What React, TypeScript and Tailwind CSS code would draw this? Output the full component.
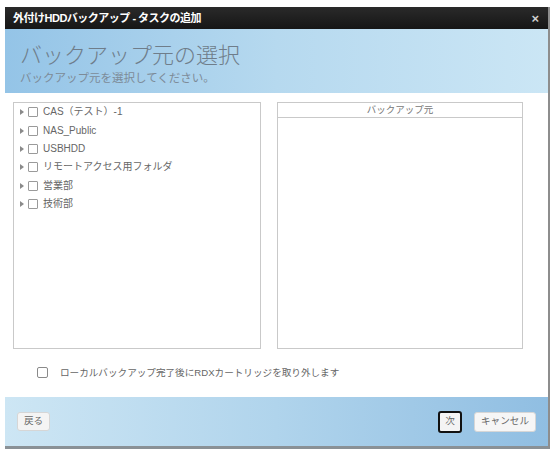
const FONT = '"Liberation Sans", "Noto Sans CJK JP", sans-serif';

const SOURCES = ["CAS（テスト）-1", "NAS_Public", "USBHDD", "リモートアクセス用フォルダ", "営業部", "技術部"];

function TreeRow({ label }: { label: string }) {
  return (
    <div className="flex h-[18.4px] items-center">
      <span className="ml-[6px] h-0 w-0 border-y-[3px] border-l-[4px] border-y-transparent border-l-[#8a8a8a]" />
      <span className="ml-[4px] h-[10px] w-[10px] rounded-[1px] border border-[#9a9a9a] bg-white" />
      <span className="ml-[5px] text-[10px] leading-none text-[#666]">{label}</span>
    </div>
  );
}

export default function App() {
  return (
    <div className="h-[456px] w-[557px] bg-white pl-[5px] pt-[7px]" style={{ fontFamily: FONT }}>
      <div className="flex w-[545px] flex-col border-r-2 border-b-[3px] border-r-[#8d8d8d] border-b-[#8a9196]">
        {/* タイトルバー */}
        <div className="flex h-[22px] items-center justify-between bg-gradient-to-b from-[#2a2a2a] to-[#161616] pl-[8px] pr-[9px]">
          <span className="text-[11px] font-bold tracking-[-0.5px] text-white">外付けHDDバックアップ - タスクの追加</span>
          <span className="text-[13px] font-bold leading-none text-[#cfcfcf]">×</span>
        </div>

        {/* 見出し */}
        <div className="flex h-[64px] flex-col bg-gradient-to-r from-[#94c4e7] via-[#b6d9ef] to-[#cbe6f5] pl-[15px] pt-[14px]">
          <div className="text-[22px] font-light leading-[26px] text-[#6f7d8a]">バックアップ元の選択</div>
          <div className="mt-[4px] text-[11.5px] leading-none text-[#7d8b98]">バックアップ元を選択してください。</div>
        </div>

        {/* 本体 */}
        <div className="flex h-[304px] flex-col bg-white pl-[8px] pt-[9px]">
          <div className="flex gap-[16px]">
            <div className="h-[247px] w-[248px] border border-[#c9c9c9]">
              {SOURCES.map((s) => (
                <TreeRow key={s} label={s} />
              ))}
            </div>
            <div className="flex h-[247px] w-[246px] flex-col border border-[#c9c9c9]">
              <div className="flex h-[15px] items-center justify-center border-b border-[#c9c9c9] text-[9.5px] text-[#777]">
                バックアップ元
              </div>
            </div>
          </div>
          <label className="ml-[24px] mt-[18px] flex items-center">
            <span className="h-[11px] w-[11px] rounded-[2px] border border-[#8a8a8a] bg-white" />
            <span className="ml-[12px] text-[9.6px] leading-none text-[#666]">
              ローカルバックアップ完了後にRDXカートリッジを取り外します
            </span>
          </label>
        </div>

        {/* フッター */}
        <div className="flex h-[49px] items-center bg-gradient-to-r from-[#cde6f4] via-[#b0d4ec] to-[#90bee2] pl-[12px] pr-[12px]">
          <button className="h-[19px] w-[33px] rounded-[3px] border border-[#d6d6d6] bg-[#f4f4f4] text-[9.6px] text-[#666]">
            戻る
          </button>
          <div className="ml-auto flex items-center gap-[12px]">
            <button className="h-[22px] w-[24px] rounded-[3px] border-2 border-[#111] bg-[#f4f4f4] text-[9.6px] text-[#666]">
              次
            </button>
            <button className="h-[20px] w-[62px] rounded-[3px] border border-[#d6d6d6] bg-[#f6f6f6] text-[9.6px] text-[#666]">
              キャンセル
            </button>
          </div>
        </div>
      </div>
    </div>
  );
}
